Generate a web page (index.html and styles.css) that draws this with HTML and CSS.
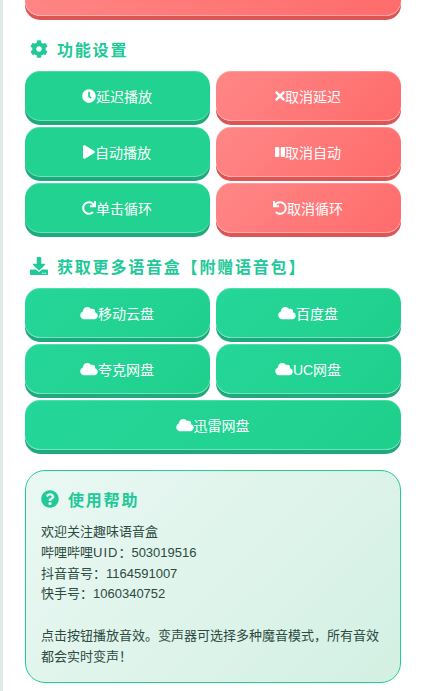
FILE: index.html
```html
<!DOCTYPE html>
<html lang="zh-CN">
<head>
<meta charset="utf-8">
<title>趣味语音盒</title>
<link rel="stylesheet" href="styles.css">
</head>
<body>
<svg class="sprite" xmlns="http://www.w3.org/2000/svg">
    <symbol id="i-clock" viewBox="0 0 512 512"><path d="M256,8C119,8,8,119,8,256S119,504,256,504,504,393,504,256,393,8,256,8Zm92.49,313h0l-20,25a16,16,0,0,1-22.49,2.5h0l-67-49.72a40,40,0,0,1-15-31.23V112a16,16,0,0,1,16-16h32a16,16,0,0,1,16,16V256l58,42.5A16,16,0,0,1,348.49,321Z"/></symbol>
    <symbol id="i-times" viewBox="0 0 352 512"><path d="M242.72 256l100.07-100.07c12.28-12.28 12.28-32.19 0-44.48l-22.24-22.24c-12.28-12.28-32.19-12.28-44.48 0L176 189.28 75.93 89.21c-12.28-12.28-32.19-12.28-44.48 0L9.21 111.45c-12.28 12.28-12.28 32.19 0 44.48L109.28 256 9.21 356.07c-12.28 12.28-12.28 32.19 0 44.48l22.24 22.24c12.28 12.28 32.2 12.28 44.48 0L176 322.72l100.07 100.07c12.28 12.28 32.2 12.28 44.48 0l22.24-22.24c12.28-12.28 12.28-32.19 0-44.48L242.72 256z"/></symbol>
    <symbol id="i-play" viewBox="0 0 448 512"><path d="M424.4 214.7L72.4 6.6C43.8-10.3 0 6.1 0 47.9V464c0 37.5 40.7 60.1 72.4 41.3l352-208c31.4-18.5 31.5-64.1 0-82.6z"/></symbol>
    <symbol id="i-pause" viewBox="0 0 448 512"><path d="M144 479H48c-26.5 0-48-21.5-48-48V79c0-26.5 21.5-48 48-48h96c26.5 0 48 21.5 48 48v352c0 26.5-21.5 48-48 48zm304-48V79c0-26.5-21.5-48-48-48h-96c-26.5 0-48 21.5-48 48v352c0 26.5 21.5 48 48 48h96c26.5 0 48-21.5 48-48z"/></symbol>
    <symbol id="i-redo" viewBox="0 0 512 512"><path d="M500.33 0h-47.41a12 12 0 0 0-12 12.57l4 82.76A247.42 247.42 0 0 0 256 8C119.34 8 7.9 119.53 8 256.19 8.1 393.07 119.1 504 256 504a247.1 247.1 0 0 0 166.18-63.91 12 12 0 0 0 .48-17.43l-34-34a12 12 0 0 0-16.38-.55A176 176 0 1 1 402.1 157.8l-101.53-4.87a12 12 0 0 0-12.57 12v47.41a12 12 0 0 0 12 12h200.33a12 12 0 0 0 12-12V12a12 12 0 0 0-12-12z"/></symbol>
    <symbol id="i-undo" viewBox="0 0 512 512"><path d="M212.333 224.333H12c-6.627 0-12-5.373-12-12V12C0 5.373 5.373 0 12 0h48c6.627 0 12 5.373 12 12v78.112C117.773 39.279 184.26 7.47 258.175 8.007c136.906.994 246.448 111.623 246.157 248.532C504.041 393.258 393.12 504 256.333 504c-64.089 0-122.496-24.313-166.51-64.215-5.099-4.622-5.334-12.554-.467-17.42l33.967-33.967c4.474-4.474 11.662-4.717 16.401-.525C170.76 415.336 211.58 432 256.333 432c97.268 0 176-78.716 176-176 0-97.267-78.716-176-176-176-58.496 0-110.28 28.476-142.274 72.333h98.274c6.627 0 12 5.373 12 12v48c0 6.627-5.373 12-12 12z"/></symbol>
    <symbol id="i-cloud" viewBox="0 0 640 512"><path d="M537.6 226.6c4.1-10.7 6.4-22.4 6.4-34.6 0-53-43-96-96-96-19.7 0-38.1 6-53.3 16.2C367 64.2 315.3 32 256 32c-88.4 0-160 71.6-160 160 0 2.7.1 5.4.2 8.1C40.2 219.8 0 273.2 0 336c0 79.5 64.5 144 144 144h368c70.7 0 128-57.3 128-128 0-61.9-44-113.6-102.4-125.4z"/></symbol>
    <symbol id="i-cog" viewBox="0 0 512 512"><path d="M487.4 315.7l-42.6-24.6c4.3-23.2 4.3-47 0-70.2l42.6-24.6c4.9-2.8 7.1-8.6 5.5-14-11.1-35.6-30-67.8-54.7-94.6-3.8-4.1-10-5.1-14.8-2.3L380.8 110c-17.9-15.4-38.5-27.3-60.8-35.1V25.8c0-5.6-3.9-10.5-9.4-11.7-36.7-8.2-74.3-7.8-109.2 0-5.5 1.2-9.4 6.1-9.4 11.7V75c-22.2 7.9-42.8 19.8-60.8 35.1L88.7 85.5c-4.9-2.8-11-1.9-14.8 2.3-24.7 26.7-43.6 58.9-54.7 94.6-1.7 5.4.6 11.2 5.5 14L67.3 221c-4.3 23.2-4.3 47 0 70.2l-42.6 24.6c-4.9 2.8-7.1 8.6-5.5 14 11.1 35.6 30 67.8 54.7 94.6 3.8 4.1 10 5.1 14.8 2.3l42.6-24.6c17.9 15.4 38.5 27.3 60.8 35.1v49.2c0 5.6 3.9 10.5 9.4 11.7 36.7 8.2 74.3 7.8 109.2 0 5.5-1.2 9.4-6.1 9.4-11.7v-49.2c22.2-7.9 42.8-19.8 60.8-35.1l42.6 24.6c4.9 2.8 11 1.9 14.8-2.3 24.7-26.7 43.6-58.9 54.7-94.6 1.5-5.5-.7-11.3-5.6-14.1zM256 336c-44.1 0-80-35.9-80-80s35.9-80 80-80 80 35.9 80 80-35.9 80-80 80z"/></symbol>
    <symbol id="i-download" viewBox="0 0 512 512"><path d="M216 0h80c13.3 0 24 10.7 24 24v168h87.7c17.8 0 26.7 21.5 14.1 34.1L269.7 378.3c-7.5 7.5-19.8 7.5-27.3 0L90.1 226.1c-12.6-12.6-3.7-34.1 14.1-34.1H192V24c0-13.3 10.7-24 24-24zm296 376v112c0 13.3-10.7 24-24 24H24c-13.3 0-24-10.7-24-24V376c0-13.3 10.7-24 24-24h146.7l49 49c20.1 20.1 52.5 20.1 72.6 0l49-49H488c13.3 0 24 10.7 24 24zm-124 88c0-11-9-20-20-20s-20 9-20 20 9 20 20 20 20-9 20-20zm64 0c0-11-9-20-20-20s-20 9-20 20 9 20 20 20 20-9 20-20z"/></symbol>
    <symbol id="i-help" viewBox="0 0 512 512"><path d="M504 256c0 136.997-111.043 248-248 248S8 392.997 8 256C8 119.083 119.043 8 256 8s248 111.083 248 248zM262.655 90c-54.497 0-89.255 22.957-116.549 63.758-3.536 5.286-2.353 12.415 2.715 16.258l34.699 26.31c5.205 3.947 12.621 3.008 16.665-2.122 17.864-22.658 30.113-35.797 57.303-35.797 20.429 0 45.698 13.148 45.698 32.958 0 14.976-12.363 22.667-32.534 33.976C247.128 238.528 216 254.941 216 296v4c0 6.627 5.373 12 12 12h56c6.627 0 12-5.373 12-12v-1.333c0-28.462 83.186-29.647 83.186-106.667 0-58.002-60.165-102-116.531-102zM256 338c-25.365 0-46 20.635-46 46 0 25.364 20.635 46 46 46s46-20.636 46-46c0-25.365-20.635-46-46-46z"/></symbol>
</svg>

<div class="page">
    <div class="btn red top-btn"></div>

    <h3 class="section-title"><svg class="title-icon"><use href="#i-cog"/></svg>功能设置</h3>
    <div class="btn-grid">
        <div class="btn green flat"><svg class="ic ic-clock"><use href="#i-clock"/></svg>延迟播放</div>
        <div class="btn red"><svg class="ic ic-times"><use href="#i-times"/></svg>取消延迟</div>
        <div class="btn green flat"><svg class="ic ic-play"><use href="#i-play"/></svg>自动播放</div>
        <div class="btn red"><svg class="ic ic-pause"><use href="#i-pause"/></svg>取消自动</div>
        <div class="btn green flat"><svg class="ic ic-clock"><use href="#i-redo"/></svg>单击循环</div>
        <div class="btn red"><svg class="ic ic-clock"><use href="#i-undo"/></svg>取消循环</div>
    </div>

    <h3 class="section-title"><svg class="title-icon"><use href="#i-download"/></svg>获取更多语音盒【附赠语音包】</h3>
    <div class="btn-grid">
        <div class="btn green"><svg class="ic ic-cloud"><use href="#i-cloud"/></svg>移动云盘</div>
        <div class="btn green"><svg class="ic ic-cloud"><use href="#i-cloud"/></svg>百度盘</div>
        <div class="btn green"><svg class="ic ic-cloud"><use href="#i-cloud"/></svg>夸克网盘</div>
        <div class="btn green"><svg class="ic ic-cloud"><use href="#i-cloud"/></svg>UC网盘</div>
        <div class="btn green wide"><svg class="ic ic-cloud"><use href="#i-cloud"/></svg>迅雷网盘</div>
    </div>

    <div class="help-card">
        <h3 class="help-title"><svg class="title-icon"><use href="#i-help"/></svg>使用帮助</h3>
        <p class="help-text">欢迎关注趣味语音盒<br>哔哩哔哩<span class="wide-latin">UID</span>：503019516<br>抖音音号：1164591007<br>快手号：1060340752<br><br>点击按钮播放音效。变声器可选择多种魔音模式，所有音效都会实时变声！</p>
    </div>
</div>
</body>
</html>
```

FILE: styles.css
```css
html { background: #fff; }
body {
    margin: 0;
    font-family: "Liberation Sans", "Noto Sans CJK SC", sans-serif;
    font-size: 14px;
    background: #dfeae6;
    overflow: hidden;
}
.sprite { display: none; }
.page {
    margin-left: 3px;
    padding: 0 20px 20px 22px;
    background: #fff;
}

/* buttons */
.btn-grid {
    display: grid;
    grid-template-columns: 1fr 1fr;
    gap: 6px;
}
.btn {
    display: flex;
    align-items: center;
    justify-content: center;
    height: 50px;
    padding-right: 1px;
    box-sizing: border-box;
    border-radius: 15px;
    color: #fff;
    font-size: 14px;
}
.btn.green {
    background: linear-gradient(135deg, #25d69a, #1fd08c);
    box-shadow: 0 4px 0 #1fa97f, inset 0 -1px 0 rgba(255,255,255,.35), inset 0 1px 0 rgba(255,255,255,.2);
}
.btn.green.flat { background: #21d290; }
.btn.red {
    background: linear-gradient(135deg, #ff8787, #ff6b6b);
    box-shadow: 0 4px 0 #de5555, inset 0 -1px 0 rgba(255,255,255,.35), inset 0 1px 0 rgba(255,255,255,.2);
}
.btn.wide { grid-column: span 2; }
.top-btn { margin-top: -34px; }

.ic { fill: currentColor; height: 14px; margin-top: -1px; }
.ic-clock { width: 14px; }
.ic-times { width: 10px; }
.ic-play { width: 12px; }
.ic-pause { width: 10px; }
.ic-cloud { width: 18px; }

/* section titles */
.section-title {
    display: flex;
    align-items: center;
    height: 22px;
    margin: 22px 0 11px;
    padding-left: 5px;
    color: #20c997;
    font-size: 16px;
    font-weight: 700;
    letter-spacing: 1.8px;
}
.title-icon {
    width: 18px;
    height: 18px;
    margin-right: 9px;
    fill: currentColor;
    flex: none;
}

/* help */
.help-card {
    margin-top: 20px;
    padding: 15px 15px 14px;
    border: 1px solid #20d090;
    border-radius: 20px;
    background: linear-gradient(135deg, #eaf8f3, #d3f0e3);
}
.help-title {
    display: flex;
    align-items: center;
    height: 25px;
    margin: 0 0 11px;
    color: #20c997;
    font-size: 16px;
    font-weight: 700;
    letter-spacing: 1.8px;
}
.help-text {
    margin: 0;
    color: #2c4a3e;
    font-size: 13px;
    line-height: 1.6;
}
.wide-latin { letter-spacing: 1px; }
```
